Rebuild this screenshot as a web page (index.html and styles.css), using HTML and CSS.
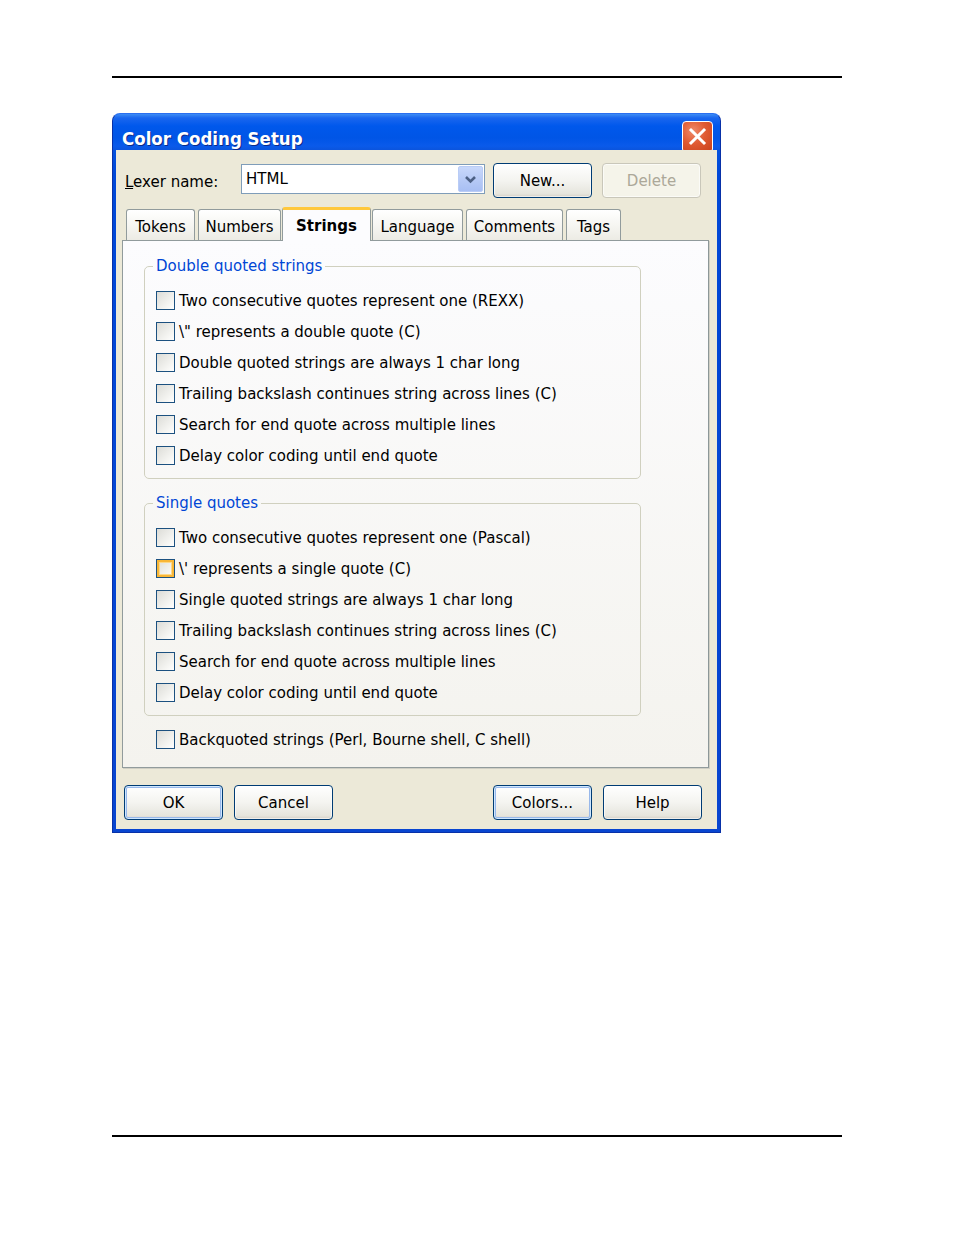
FILE: index.html
```html
<!DOCTYPE html>
<html>
<head>
<meta charset="utf-8">
<link rel="stylesheet" href="styles.css">
</head>
<body>
<div class="page">
  <div class="rule"></div>
  <div class="dialog">
    <div class="titlebar">
      <span class="title">Color Coding Setup</span>
      <span class="close">
        <svg width="19" height="19" viewBox="0 0 19 19"><path d="M3 3 L16 16 M16 3 L3 16" stroke="#fff" stroke-width="3" stroke-linecap="square"/></svg>
      </span>
    </div>
    <div class="client">
      <div class="lexer-row">
        <label class="lbl"><u>L</u>exer name:</label>
        <div class="combo">
          <span class="combo-text">HTML</span>
          <span class="combo-btn">
            <svg width="13" height="9" viewBox="0 0 13 9"><path d="M2 2 L6.5 6.5 L11 2" fill="none" stroke="#4D6185" stroke-width="2.6"/></svg>
          </span>
        </div>
        <button class="btn">New...</button>
        <button class="btn disabled">Delete</button>
      </div>
      <div class="tabs">
        <div class="tab">Tokens</div>
        <div class="tab">Numbers</div>
        <div class="tab active">Strings</div>
        <div class="tab">Language</div>
        <div class="tab">Comments</div>
        <div class="tab">Tags</div>
      </div>
      <div class="panel">
        <fieldset class="group">
          <legend>Double quoted strings</legend>
          <div class="row"><span class="cb"></span><span>Two consecutive quotes represent one (REXX)</span></div>
          <div class="row"><span class="cb"></span><span>\" represents a double quote (C)</span></div>
          <div class="row"><span class="cb"></span><span>Double quoted strings are always 1 char long</span></div>
          <div class="row"><span class="cb"></span><span>Trailing backslash continues string across lines (C)</span></div>
          <div class="row"><span class="cb"></span><span>Search for end quote across multiple lines</span></div>
          <div class="row"><span class="cb"></span><span>Delay color coding until end quote</span></div>
        </fieldset>
        <fieldset class="group second">
          <legend>Single quotes</legend>
          <div class="row"><span class="cb"></span><span>Two consecutive quotes represent one (Pascal)</span></div>
          <div class="row"><span class="cb hover"></span><span>\' represents a single quote (C)</span></div>
          <div class="row"><span class="cb"></span><span>Single quoted strings are always 1 char long</span></div>
          <div class="row"><span class="cb"></span><span>Trailing backslash continues string across lines (C)</span></div>
          <div class="row"><span class="cb"></span><span>Search for end quote across multiple lines</span></div>
          <div class="row"><span class="cb"></span><span>Delay color coding until end quote</span></div>
        </fieldset>
        <div class="row solo"><span class="cb"></span><span>Backquoted strings (Perl, Bourne shell, C shell)</span></div>
      </div>
      <div class="bottom-row">
        <div class="btn-group">
          <button class="btn default">OK</button>
          <button class="btn">Cancel</button>
        </div>
        <div class="btn-group">
          <button class="btn focus">Colors...</button>
          <button class="btn">Help</button>
        </div>
      </div>
    </div>
  </div>
  <div class="rule bottom"></div>
</div>
</body>
</html>
```
FILE: styles.css
```css
html, body {
  margin: 0;
  padding: 0;
  background: #ffffff;
}
body {
  font-family: "DejaVu Sans", "Liberation Sans", sans-serif;
  font-size: 15px;
  color: #000;
}
.page {
  padding: 76px 0 0 112px;
}
.rule {
  width: 730px;
  height: 2px;
  background: #000;
}
.rule.bottom {
  margin-top: 302px;
}
.dialog {
  margin-top: 35px;
  width: 609px;
  height: 720px;
  box-sizing: border-box;
  background: linear-gradient(#0a5fe8, #0048d8 60px, #0845d0);
  border-radius: 8px 8px 0 0;
  padding: 0 3px 3px 3px;
  display: flex;
  flex-direction: column;
  border: 1px solid #0831a8;
  border-top-color: #2a6ff0;
}
.titlebar {
  height: 36px;
  flex: none;
  display: flex;
  align-items: center;
  justify-content: space-between;
  background: linear-gradient(#3d8cf5 0px, #1a66ee 4px, #0058ec 12px, #0055e6 24px, #0a5aea 32px, #0b54dd 36px);
  margin: 0 -3px;
  padding-left: 9px;
  padding-right: 7px;
  border-radius: 7px 7px 0 0;
}
.title {
  font-family: "DejaVu Sans Condensed", "DejaVu Sans", sans-serif;
  font-weight: bold;
  font-size: 18.5px;
  color: #fff;
  text-shadow: 1px 1px 0 #0a2a8a;
  margin-top: 12px;
}
.close {
  width: 29px;
  height: 30px;
  margin-top: 9px;
  border: 1px solid #fff;
  border-radius: 4px;
  background: radial-gradient(circle at 35% 30%, #ef8a6a, #e05a32 45%, #c8401a);
  display: flex;
  align-items: center;
  justify-content: center;
}
.client {
  flex: 1;
  background: #ece9d8;
  padding: 13px 8px 0 6px;
  display: flex;
  flex-direction: column;
}
.lexer-row {
  display: flex;
  align-items: flex-start;
  height: 35px;
}
.lbl {
  width: 116px;
  flex: none;
  padding-left: 3px;
  margin-top: 10px;
}
.combo {
  width: 244px;
  height: 30px;
  flex: none;
  margin-top: 1px;
  box-sizing: border-box;
  border: 1px solid #7f9db9;
  background: #fff;
  display: flex;
  align-items: center;
  justify-content: space-between;
  padding: 0 1px 0 4px;
}
.combo-btn {
  width: 25px;
  height: 26px;
  border-radius: 2px;
  background: linear-gradient(#c8d8fb, #b4c8f5 60%, #a8bff3);
  border: 1px solid #b9ccf6;
  box-sizing: border-box;
  display: flex;
  align-items: center;
  justify-content: center;
}
.btn {
  font-family: inherit;
  font-size: inherit;
  color: #000;
  width: 99px;
  height: 35px;
  flex: none;
  box-sizing: border-box;
  border: 1px solid #003c74;
  border-radius: 4px;
  background: linear-gradient(#ffffff, #f4f4f0 50%, #e6e5dd 90%, #d6d0c5);
  padding: 1px 0 0 0;
  margin-left: 8px;
  box-shadow: inset 0 0 0 1px rgba(255,255,255,0.6);
}
.lexer-row .btn + .btn {
  margin-left: 10px;
}
.btn.disabled {
  color: #aca899;
  border-color: #c9c7ba;
  background: #f5f4ea;
}
.btn.default, .btn.focus {
  box-shadow: inset 0 0 0 1px #cee7ff, inset 0 0 0 2px #98b8ea;
}
.tabs {
  margin-top: 9px;
  height: 33px;
  display: grid;
  grid-template-columns: 69px 83px 85px 91px 97px 55px;
  column-gap: 3px;
  align-items: end;
  padding-left: 4px;
  position: relative;
  z-index: 1;
}
.tab {
  height: 31px;
  box-sizing: border-box;
  border: 1px solid #919b9c;
  border-bottom: none;
  border-radius: 3px 3px 0 0;
  background: linear-gradient(#ffffff, #f6f6f2 50%, #ecebe4);
  display: flex;
  align-items: center;
  justify-content: center;
  padding-top: 4px;
}
.tab.active {
  height: 34px;
  margin: 0 -2px -1px -2px;
  background: #fcfcfe;
  border-top: 3px solid #ffc83c;
  border-radius: 3px 3px 0 0;
  font-weight: bold;
  padding-top: 1px;
}
.panel {
  height: 528px;
  box-sizing: border-box;
  border: 1px solid #919b9c;
  border-right-color: #8c9798;
  box-shadow: 1px 1px 0 #d0cfc4;
  background: linear-gradient(#fcfcfe, #f4f3ee);
  padding: 15px 0 0 21px;
  display: flex;
  flex-direction: column;
}
.group {
  width: 497px;
  box-sizing: border-box;
  margin: 0;
  border: 1px solid #d0d0bf;
  border-radius: 5px;
  padding: 9px 0 7px 11px;
}
.group.second {
  margin-top: 14px;
}
.group legend {
  color: #0046d5;
  line-height: 20px;
  padding: 0 3px;
  margin-left: -3px;
}
.row {
  height: 31px;
  display: flex;
  align-items: center;
  gap: 4px;
}
.row.solo {
  margin-top: 8px;
  padding-left: 12px;
}
.cb {
  width: 19px;
  height: 19px;
  box-sizing: border-box;
  border: 1px solid #1c5180;
  background: linear-gradient(135deg, #dcdcd7, #f5f5f2 70%, #ffffff);
  flex: none;
}
.cb.hover {
  box-shadow: inset 0 0 0 2px #f8b636, inset 0 0 0 3px #fdd889;
}
.bottom-row {
  margin-top: 17px;
  display: flex;
  justify-content: space-between;
  padding-right: 7px;
}
.btn-group {
  display: flex;
  gap: 11px;
}
.btn-group .btn {
  margin-left: 0;
}
.bottom-row .btn-group:first-child {
  padding-left: 2px;
}
```
